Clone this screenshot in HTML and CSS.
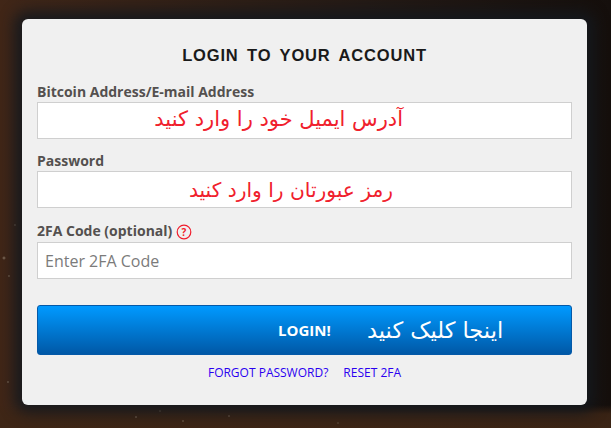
FILE: index.html
```html
<!DOCTYPE html>
<html lang="en">
<head>
<meta charset="utf-8">
<title>Login</title>
<link rel="stylesheet" href="styles.css">
</head>
<body>
<main class="card">
  <h1 class="title">LOGIN TO YOUR ACCOUNT</h1>
  <form class="form">
    <div class="field">
      <label class="label"><span>Bitcoin Address/E-mail Address</span></label>
      <div class="input input-fa input-email"><span class="fa fa-email" dir="rtl" lang="fa">آدرس ایمیل خود را وارد کنید</span></div>
    </div>
    <div class="field">
      <label class="label"><span>Password</span></label>
      <div class="input input-fa input-pass"><span class="fa fa-pass" dir="rtl" lang="fa">رمز عبورتان را وارد کنید</span></div>
    </div>
    <div class="field field-last">
      <label class="label"><span>2FA Code (optional)</span>
        <svg class="help" viewBox="0 0 16 16" width="16" height="16" aria-hidden="true"><circle cx="8" cy="8" r="6.8" fill="none" stroke="#f01c2c" stroke-width="1.2"/><text x="8" y="11.6" text-anchor="middle" class="help-mark">?</text></svg>
      </label>
      <div class="input"><span class="placeholder">Enter 2FA Code</span></div>
    </div>
    <button class="submit" type="button"><span class="submit-label">LOGIN!</span><span class="submit-fa" dir="rtl" lang="fa">اینجا کلیک کنید</span></button>
  </form>
  <nav class="links"><a href="#">FORGOT PASSWORD?</a><a href="#">RESET 2FA</a></nav>
</main>
</body>
</html>
```
FILE: styles.css
```css
html, body { margin: 0; height: 100%; }
body {
  width: 611px;
  height: 428px;
  overflow: hidden;
  padding-top: 19px;
  box-sizing: border-box;
  background-color: #1d1512;
  background-image:
    radial-gradient(circle 2px at 4px 258px, #8a7764, transparent),
    radial-gradient(circle 1.5px at 9px 276px, #7d6a58, transparent),
    radial-gradient(circle 1.5px at 15px 225px, #7d6a58, transparent),
    radial-gradient(circle 1.5px at 8px 382px, #7d6a58, transparent),
    radial-gradient(circle 1.5px at 136px 417px, #7d6a58, transparent),
    radial-gradient(circle 1.5px at 160px 411px, #75624f, transparent),
    radial-gradient(circle 1.5px at 183px 421px, #75624f, transparent),
    radial-gradient(circle 1.5px at 229px 416px, #75624f, transparent),
    radial-gradient(circle 1.5px at 338px 423px, #5c4a3a, transparent),
    linear-gradient(to top, rgba(62,38,22,.95) 0, rgba(62,38,22,.85) 14px, rgba(62,38,22,0) 23px),
    linear-gradient(to right, #412617 0, #3f2618 14px, #241a15 60%, #150f0c 100%);
}
.card {
  width: 565px;
  height: 386px;
  margin-left: 22px;
  box-sizing: border-box;
  padding: 25px 15px 0;
  background: #f0f0f0;
  border-radius: 6px;
  box-shadow: 0 0 14px 8px rgba(20, 24, 30, .9);
  font-family: "Open Sans", sans-serif;
}
.title {
  margin: 0;
  height: 22px;
  text-align: center;
  font-family: "Liberation Sans", Arial, sans-serif;
  font-size: 16.5px;
  line-height: 22px;
  font-weight: 700;
  letter-spacing: .85px;
  word-spacing: 3px;
  color: #1a1a1a;
}
.form { margin-top: 17px; }
.field { margin-bottom: 13px; height: 56px; display: flex; flex-direction: column; }
.field-last { margin-top: 13px; margin-bottom: 26px; height: 58px; }
.label {
  display: flex;
  align-items: center;
  gap: 4px;
  height: 19px;
  box-sizing: border-box;
  padding-bottom: 2px;
  font-size: 14px;
  line-height: 17px;
  font-weight: 700;
  color: #54504f;
}
.field-last .label { height: 21px; }
.input {
  height: 37px;
  box-sizing: border-box;
  border: 1px solid #cfcfcf;
  background: #fff;
  display: flex;
  align-items: center;
}
.input-fa { justify-content: flex-end; }
.input-email { padding-right: 168px; padding-bottom: 4px; }
.input-pass { padding-right: 178px; }
.fa {
  font-family: "DejaVu Sans", sans-serif;
  color: #f0202c;
  line-height: 30px;
}
.fa-email { font-size: 21px; }
.fa-pass { font-size: 20.2px; }
.placeholder {
  flex: 1;
  padding-left: 7px;
  font-size: 16px;
  color: #7b7b7b;
}
.help { display: block; flex: none; margin-top: 2px; }
.help-mark { font: 700 10px "Open Sans", sans-serif; fill: #f01c2c; }
.submit {
  display: flex;
  align-items: center;
  width: 535px;
  height: 50px;
  padding: 0 0 0 240px;
  border: 1px solid #0459a8;
  border-radius: 3px;
  background: linear-gradient(to bottom, #0099ff 0, #0090f2 15%, #0058a6 100%);
  font-family: "Open Sans", sans-serif;
  color: #fff;
  cursor: pointer;
}
.submit-label { font-size: 15px; font-weight: 700; width: 89px; text-align: left; }
.submit-fa { font-family: "DejaVu Sans", sans-serif; font-size: 22.5px; white-space: nowrap; }
.links {
  display: flex;
  justify-content: center;
  gap: 15px;
  margin-top: 10px;
  font-family: "Open Sans", sans-serif;
  font-size: 12px;
  line-height: 16px;
}
.links a { color: #2a00f0; text-decoration: none; }
```
